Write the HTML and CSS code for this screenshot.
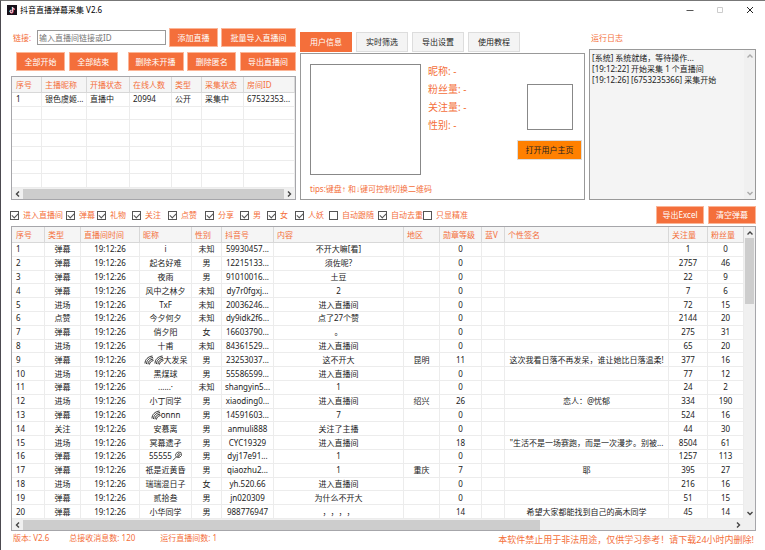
FILE: index.html
```html
<!DOCTYPE html>
<html lang="zh-CN">
<head>
<meta charset="utf-8">
<title>抖音直播弹幕采集 V2.6</title>
<link rel="stylesheet" href="styles.css">
</head>
<body>
<svg width="0" height="0" class="defs" aria-hidden="true">
  <symbol id="left" viewBox="0 0 8 8"><path d="M5 1.5 2.5 4 5 6.5" fill="none" stroke="currentColor" stroke-width="1.4"/></symbol>
  <symbol id="right" viewBox="0 0 8 8"><path d="M3 1.5 5.5 4 3 6.5" fill="none" stroke="currentColor" stroke-width="1.4"/></symbol>
  <symbol id="up" viewBox="0 0 8 8"><path d="M1.5 5.5 4 3l2.5 2.5" fill="none" stroke="currentColor" stroke-width="1.4"/></symbol>
  <symbol id="down" viewBox="0 0 8 8"><path d="M1.5 3 4 5.5 6.500 3" fill="none" stroke="currentColor" stroke-width="1.4"/></symbol>
  <symbol id="rainbow" viewBox="0 0 10 10"><path d="M1 8.500C1 4.500 4 1.500 8.500 1M2.500 9C2.500 5.500 5 3 9 2.500M4 9.300C4 6.500 6 4.500 9.300 4M5.500 9.500C5.500 7.500 7 6 9.500 5.500" fill="none" stroke="#333" stroke-width="1"/></symbol>
  <symbol id="lens" viewBox="0 0 10 10"><path d="M4 2.500 6 1l3 .5.5 3-2 2-3-.3-1-2zM4.300 6 1 9.300M5 3.500l3 1.500M6 2.500l2.500 1M5 5l2 1" fill="none" stroke="#444" stroke-width=".9"/></symbol>
</svg>
<header class="titlebar">
  <svg class="logo" viewBox="0 0 20 20"><rect width="20" height="20" fill="#17101a"/><path d="M10.500 4v8.500a2.500 2.500 0 1 1-2.500-2.500M10.500 4c.3 2.300 1.700 3.500 4 3.700" fill="none" stroke="#3cd" stroke-width="2"/><path d="M12 5v8.500A2.500 2.500 0 1 1 9.500 11M12 5c.3 2.300 1.700 3.500 4 3.700" fill="none" stroke="#f03a5f" stroke-width="2.400"/><path d="M11.200 4.500V13a2.500 2.500 0 1 1-2.500-2.500M11.200 4.500c.3 2.300 1.700 3.500 4 3.700" fill="none" stroke="#fff" stroke-width="1.600"/></svg>
  <h1>抖音直播弹幕采集 V2.6</h1>
  <div class="window-buttons">
    <button aria-label="最小化"><svg viewBox="0 0 8 8"><path d="M.5 4.500h7" stroke="#555"/></svg></button>
    <button aria-label="最大化" disabled><svg viewBox="0 0 8 8"><path d="M1.500 1.500h5v5h-5z" fill="none" stroke="#ccc"/></svg></button>
    <button aria-label="关闭"><svg viewBox="0 0 8 8"><path d="m1 1 6 6M7 1 1 7" stroke="#222"/></svg></button>
  </div>
</header>
<main>
  <div class="top">
    <section class="rooms">
      <div class="link-row">
        <label for="link">链接:</label>
        <input id="link" type="text" placeholder="输入直播间链接或ID">
        <button class="btn">添加直播</button>
        <button class="btn wide">批量导入直播间</button>
      </div>
      <div class="actions">
        <button class="btn">全部开始</button>
        <button class="btn">全部结束</button>
        <button class="btn long">删除未开播</button>
        <button class="btn">删除匿名</button>
        <button class="btn long">导出直播间</button>
      </div>
      <div class="list room-list">
        <table>
          <colgroup><col class="w30"><col class="w45"><col class="w43"><col class="w42"><col class="w30"><col class="w42"><col></colgroup>
          <thead><tr><th>序号</th><th>主播昵称</th><th>开播状态</th><th>在线人数</th><th>类型</th><th>采集状态</th><th>房间ID</th></tr></thead>
          <tbody>
            <tr><td>1</td><td>银色虞姬...</td><td>直播中</td><td>20994</td><td>公开</td><td>采集中</td><td>67532353...</td></tr>
            <tr><td></td><td></td><td></td><td></td><td></td><td></td><td></td></tr>
            <tr><td></td><td></td><td></td><td></td><td></td><td></td><td></td></tr>
            <tr><td></td><td></td><td></td><td></td><td></td><td></td><td></td></tr>
            <tr><td></td><td></td><td></td><td></td><td></td><td></td><td></td></tr>
            <tr><td></td><td></td><td></td><td></td><td></td><td></td><td></td></tr>
            <tr><td></td><td></td><td></td><td></td><td></td><td></td><td></td></tr>
          </tbody>
        </table>
        <div class="hbar"><svg><use href="#left"/></svg><i></i><svg><use href="#right"/></svg></div>
      </div>
    </section>
    <section class="user">
      <nav class="tabs">
        <button class="active">用户信息</button>
        <button>实时筛选</button>
        <button>导出设置</button>
        <button>使用教程</button>
      </nav>
      <div class="card">
        <div class="photo"></div>
        <div class="facts"><p>昵称: -</p><p>粉丝量: -</p><p>关注量: -</p><p>性别: -</p></div>
        <div class="side"><div class="qr"></div><button>打开用户主页</button></div>
        <p class="tips">tips:键盘<kbd>↑</kbd> 和<kbd>↓</kbd>键可控制切换二维码</p>
      </div>
    </section>
    <section class="log">
      <label for="log">运行日志</label>
      <div class="log-box">
        <textarea id="log" readonly>[系统] 系统就绪，等待操作...
[19:12:22] 开始采集 1 个直播间
[19:12:26] [6753235366] 采集开始</textarea>
        <div class="vbar idle"><svg><use href="#up"/></svg><svg><use href="#down"/></svg></div>
      </div>
    </section>
  </div>
  <div class="filter-row">
    <div class="filters">
      <label><input type="checkbox" checked>进入直播间</label>
      <label><input type="checkbox" checked>弹幕</label>
      <label><input type="checkbox" checked>礼物</label>
      <label><input type="checkbox" checked>关注</label>
      <label><input type="checkbox" checked>点赞</label>
      <label><input type="checkbox" checked>分享</label>
      <label><input type="checkbox" checked>男</label>
      <label><input type="checkbox" checked>女</label>
      <label><input type="checkbox" checked>人妖</label>
      <label><input type="checkbox">自动跟随</label>
      <label><input type="checkbox" checked>自动去重</label>
      <label><input type="checkbox">只显精准</label>
    </div>
    <div class="exports">
      <button class="btn">导出Excel</button>
      <button class="btn">清空弹幕</button>
    </div>
  </div>
  <div class="list messages">
    <div class="body">
      <table>
        <colgroup><col class="w33"><col class="w36"><col class="w59"><col class="w52"><col class="w30"><col class="w52"><col class="w130"><col class="w36"><col class="w42"><col class="w23"><col><col class="w39"><col class="w36"></colgroup>
        <thead><tr><th>序号</th><th>类型</th><th>直播间时间</th><th>昵称</th><th>性别</th><th>抖音号</th><th>内容</th><th>地区</th><th>勋章等级</th><th>蓝V</th><th>个性签名</th><th>关注量</th><th>粉丝量</th></tr></thead>
        <tbody>
          <tr><td>1</td><td>弹幕</td><td>19:12:26</td><td>i</td><td>未知</td><td>59930457...</td><td>不开大嘛[看]</td><td></td><td>0</td><td></td><td></td><td>1</td><td>0</td></tr>
          <tr><td>2</td><td>弹幕</td><td>19:12:26</td><td>起名好难</td><td>男</td><td>12215133...</td><td>须佐呢?</td><td></td><td>0</td><td></td><td></td><td>2757</td><td>46</td></tr>
          <tr><td>3</td><td>弹幕</td><td>19:12:26</td><td>夜雨</td><td>男</td><td>91010016...</td><td>土豆</td><td></td><td>0</td><td></td><td></td><td>22</td><td>9</td></tr>
          <tr><td>4</td><td>弹幕</td><td>19:12:26</td><td>风中之林夕</td><td>未知</td><td>dy7r0fgxj...</td><td>2</td><td></td><td>0</td><td></td><td></td><td>7</td><td>6</td></tr>
          <tr><td>5</td><td>进场</td><td>19:12:26</td><td>TxF</td><td>未知</td><td>20036246...</td><td>进入直播间</td><td></td><td>0</td><td></td><td></td><td>72</td><td>15</td></tr>
          <tr><td>6</td><td>点赞</td><td>19:12:26</td><td>今夕何夕</td><td>未知</td><td>dy9idk2f6...</td><td>点了27个赞</td><td></td><td>0</td><td></td><td></td><td>2144</td><td>20</td></tr>
          <tr><td>7</td><td>弹幕</td><td>19:12:26</td><td>俏夕阳</td><td>女</td><td>16603790...</td><td>。</td><td></td><td>0</td><td></td><td></td><td>275</td><td>31</td></tr>
          <tr><td>8</td><td>进场</td><td>19:12:26</td><td>十甫</td><td>未知</td><td>84361529...</td><td>进入直播间</td><td></td><td>0</td><td></td><td></td><td>65</td><td>20</td></tr>
          <tr><td>9</td><td>弹幕</td><td>19:12:26</td><td><svg class="emoji"><use href="#rainbow"/></svg><svg class="emoji"><use href="#rainbow"/></svg>大发呆</td><td>男</td><td>23253037...</td><td>这不开大</td><td>昆明</td><td>11</td><td></td><td>这次我看日落不再发呆，谁让她比日落温柔!</td><td>377</td><td>16</td></tr>
          <tr><td>10</td><td>进场</td><td>19:12:26</td><td>黑煤球</td><td>男</td><td>55586599...</td><td>进入直播间</td><td></td><td>0</td><td></td><td></td><td>77</td><td>12</td></tr>
          <tr><td>11</td><td>弹幕</td><td>19:12:26</td><td>......·</td><td>未知</td><td>shangyin5...</td><td>1</td><td></td><td>0</td><td></td><td></td><td>24</td><td>2</td></tr>
          <tr><td>12</td><td>进场</td><td>19:12:26</td><td>小丁同学</td><td>男</td><td>xiaoding0...</td><td>进入直播间</td><td>绍兴</td><td>26</td><td></td><td>恋人：@忧郁</td><td>334</td><td>190</td></tr>
          <tr><td>13</td><td>弹幕</td><td>19:12:26</td><td><svg class="emoji"><use href="#rainbow"/></svg>onnn</td><td>男</td><td>14591603...</td><td>7</td><td></td><td>0</td><td></td><td></td><td>524</td><td>16</td></tr>
          <tr><td>14</td><td>关注</td><td>19:12:26</td><td>安慕离</td><td>男</td><td>anmuli888</td><td>关注了主播</td><td></td><td>0</td><td></td><td></td><td>44</td><td>30</td></tr>
          <tr><td>15</td><td>进场</td><td>19:12:26</td><td>冥幕遗孑</td><td>男</td><td>CYC19329</td><td>进入直播间</td><td></td><td>18</td><td></td><td>"生活不是一场赛跑，而是一次漫步。别被...</td><td>8504</td><td>61</td></tr>
          <tr><td>16</td><td>弹幕</td><td>19:12:26</td><td>55555<svg class="emoji"><use href="#lens"/></svg></td><td>男</td><td>dyj17e91...</td><td>1</td><td></td><td>0</td><td></td><td></td><td>1257</td><td>113</td></tr>
          <tr><td>17</td><td>弹幕</td><td>19:12:26</td><td>祇是近黄昏</td><td>男</td><td>qiaozhu2...</td><td>1</td><td>重庆</td><td>7</td><td></td><td>耶</td><td>395</td><td>27</td></tr>
          <tr><td>18</td><td>进场</td><td>19:12:26</td><td>瑞瑞混日子</td><td>女</td><td>yh.520.66</td><td>进入直播间</td><td></td><td>0</td><td></td><td></td><td>216</td><td>16</td></tr>
          <tr><td>19</td><td>弹幕</td><td>19:12:26</td><td>贰拾叁</td><td>男</td><td>jn020309</td><td>为什么不开大</td><td></td><td>0</td><td></td><td></td><td>51</td><td>15</td></tr>
          <tr><td>20</td><td>弹幕</td><td>19:12:26</td><td>小华同学</td><td>男</td><td>988776947</td><td>，，，，</td><td></td><td>14</td><td></td><td>希望大家都能找到自己的高木同学</td><td>45</td><td>14</td></tr>
        </tbody>
      </table>
      <div class="vbar"><svg><use href="#up"/></svg><i></i><svg><use href="#down"/></svg></div>
    </div>
    <div class="hbar partial"><svg><use href="#left"/></svg><i></i><svg><use href="#right"/></svg></div>
  </div>
</main>
<footer>
  <span>版本: V2.6</span>
  <span>总接收消息数: 120</span>
  <span>运行直播间数: 1</span>
  <strong>本软件禁止用于非法用途，仅供学习参考！请下载24小时内删除!</strong>
</footer>
</body>
</html>
```
FILE: styles.css
```css
:root {
  --orange: #f46f3b;
  --line: #a6a6aa;
  --grid: #ececec;
}
* { box-sizing: border-box; margin: 0; padding: 0; }
body {
  display: flex;
  flex-direction: column;
  height: 100vh;
  min-height: 500px;
  border-top: 1px solid #777;
  border-left: 1px solid #4c4a50;
  background: #fff;
  color: #222;
  font: 8px/12px "Noto Sans", "Noto Sans CJK SC", sans-serif;
  text-spacing-trim: space-all;
}
button, input, textarea { font: inherit; color: inherit; }
button { white-space: nowrap; }
svg { display: block; }
.defs { position: absolute; }

.titlebar {
  display: flex;
  align-items: center;
  height: 18px;
  padding: 0 10px 0 6px;
  gap: 3px;
}
.logo { width: 10px; height: 10px; }
.titlebar h1 { font-size: 8px; font-weight: 400; color: #000; }
.window-buttons { display: flex; gap: 22px; margin-left: auto; padding-right: 1px; }
.window-buttons button { border: 0; background: none; }
.window-buttons svg { width: 8px; height: 8px; }

main {
  display: flex;
  flex-direction: column;
  flex: 1;
  min-height: 0;
  padding: 9px 9px 0 10px;
}
.top {
  display: grid;
  grid-template-columns: 285fr 285fr 167fr;
  gap: 4px;
  height: 172px;
}
.top > section { display: flex; flex-direction: column; min-width: 0; }

.btn {
  height: 19px;
  border: 1px solid #fbb597;
  background: var(--orange);
  color: #fff;
}
.link-row {
  display: flex;
  align-items: center;
  gap: 3px;
  padding-left: 2px;
  color: var(--orange);
}
.link-row label { width: 21px; }
.link-row input {
  flex: 1;
  min-width: 0;
  height: 15px;
  padding: 0 1px;
  border: 1px solid #999;
  color: #222;
}
.link-row input::placeholder { color: #777; opacity: 1; }
.link-row .btn { width: 49px; }
.link-row .wide { width: 75px; }
.actions {
  display: flex;
  justify-content: space-between;
  margin-top: 5px;
  padding-left: 5px;
}
.actions .btn { width: 49px; }
.actions .long { width: 56px; }
.actions .btn:nth-child(3) { margin-left: 6px; }

.list {
  display: flex;
  flex-direction: column;
  min-height: 0;
  border: 1px solid var(--line);
}
.room-list { flex: 1; margin-top: 5px; }
table {
  width: 100%;
  table-layout: fixed;
  border-spacing: 0;
}
th, td {
  overflow: hidden;
  white-space: nowrap;
  border-right: 1px solid var(--grid);
  border-bottom: 1px solid var(--grid);
}
th {
  height: 16px;
  padding-left: 3px;
  border-color: #d8d8d8;
  background: #f5f5f5;
  color: var(--orange);
  font-weight: 400;
  text-align: left;
}
td { height: 13px; padding-left: 3px; }
tr > :first-child { padding-left: 4px; }
.room-list table { flex: 1; }
.w23 { width: 23px; }
.w30 { width: 30px; }
.w33 { width: 33px; }
.w36 { width: 36px; }
.w39 { width: 39px; }
.w42 { width: 42px; }
.w43 { width: 43px; }
.w45 { width: 45px; }
.w52 { width: 52px; }
.w59 { width: 59px; }
.w130 { width: 130px; }

.hbar, .vbar { display: flex; align-items: center; background: #f0f0f0; color: #444; }
.hbar { flex: none; height: 11px; padding: 0 2px; gap: 1px; }
.vbar { flex-direction: column; width: 11px; padding: 2px 0; gap: 1px; }
.hbar svg, .vbar svg { flex: none; width: 8px; height: 8px; }
.hbar i, .vbar i { background: #cdcdcd; }
.hbar i { flex: 1; height: 10px; }
.hbar.partial i { flex: none; width: 71%; }
.hbar svg:last-child { margin-left: auto; }
.vbar svg:last-child { margin-top: auto; }
.vbar i { width: 9px; height: 23%; }
.vbar.idle { color: #aaa; }
.hbar.partial { padding-right: 13px; }

.tabs { display: flex; gap: 4px; margin-top: 4px; }
.tabs button {
  width: 52px;
  height: 20px;
  border: 1px solid #ddd;
  background: #f4f4f4;
}
.tabs .active { border-color: var(--orange); background: var(--orange); color: #fff; }
.card {
  display: grid;
  grid-template-columns: 111px 1fr auto;
  grid-template-rows: 111px 1fr;
  column-gap: 7px;
  flex: 1;
  margin-top: 1px;
  padding: 10px 2px 0 9px;
  border: 1px solid #999;
  color: var(--orange);
}
.photo { border: 1px solid #888; }
.facts { font-size: 10px; line-height: 18px; margin-top: -2px; }
.side { display: flex; flex-direction: column; align-items: center; gap: 10px; padding-top: 20px; }
.qr { width: 46px; height: 46px; border: 1px solid #888; }
.side button {
  width: 65px;
  height: 20px;
  border: 1px solid #ddd;
  background: #ff8000;
  color: #222;
}
.tips { grid-column: 1 / -1; align-self: center; padding-top: 4px; }
.tips kbd { font: 8px/8px "Liberation Sans", sans-serif; }

.log > label { padding: 4px 2px 5px; color: var(--orange); }
.log-box { display: flex; flex: 1; border: 1px solid #999; background: #f4f4f4; }
.log textarea {
  flex: 1;
  min-width: 0;
  padding: 2px;
  border: 0;
  background: none;
  line-height: 11px;
  resize: none;
  overflow: hidden;
}

.filter-row {
  display: flex;
  align-items: center;
  justify-content: space-between;
  height: 26px;
  padding-top: 4px;
}
.filters {
  display: grid;
  grid-template-columns: 56px 31px 35px 36px 37px 35px 27px 28px 34px 49px 45px auto;
  margin-left: -1px;
  color: var(--orange);
}
.filters label { display: flex; align-items: center; gap: 4px; white-space: nowrap; }
.filters input {
  flex: none;
  width: 9px;
  height: 9px;
  appearance: none;
  border: 1px solid #555;
  background: #fff;
}
.filters input:checked::after {
  content: "";
  display: block;
  width: 5px;
  height: 3px;
  margin: 1px;
  border: solid #555;
  border-width: 0 0 1px 1px;
  rotate: -45deg;
}
.exports { display: flex; gap: 4px; }
.exports .btn { width: 48px; height: 18px; }

.messages { flex: 1; }
.messages .body { display: flex; flex: 1; min-height: 0; }
.messages table { flex: 1; height: 100%; min-width: 0; }
.messages td { padding: 0; text-align: center; }
.messages td:first-child { padding-left: 4px; text-align: left; }
.emoji { display: inline-block; width: 10px; height: 10px; vertical-align: -2px; }

footer {
  display: flex;
  gap: 20px;
  height: 19px;
  padding: 1px 11px 0 12px;
  color: var(--orange);
}
footer span:nth-child(3) { margin-left: 5px; }
footer strong { margin: 2px 0 0 auto; font-size: 9px; font-weight: 400; }
```
